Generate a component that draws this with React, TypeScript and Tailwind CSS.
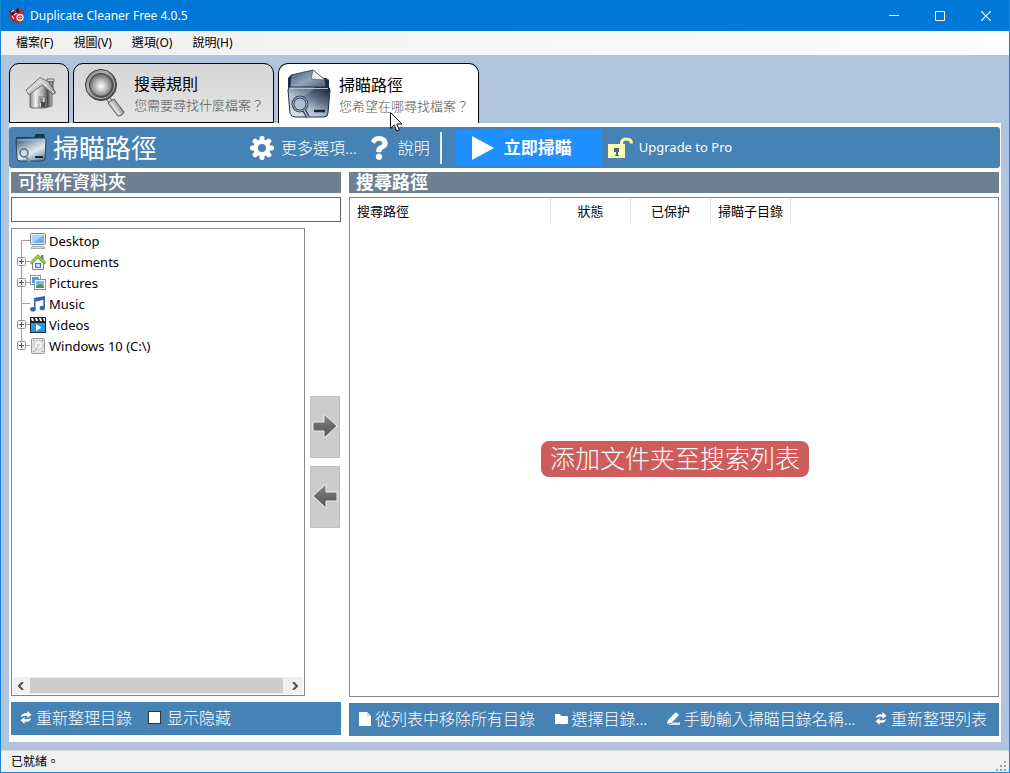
import React from "react";
import { FaQuestion } from "react-icons/fa";

interface TreeNode {
  name: string;
  expandable: boolean;
  icon: React.ReactNode;
}

const MENUS = ["檔案(F)", "視圖(V)", "選項(O)", "說明(H)"];

const AppIcon = () => (
  <svg width="17" height="17" viewBox="0 0 17 17">
    <path d="M1 3l3-1 2 2 3-3 2 2 3-1 1 4-1 8-5 2-5-1-3-4z" fill="#c8202c" />
    <path d="M0 4l3-1 3 3-3 2z" fill="#1b1b2b" />
    <path d="M7 2l3-1v5l-3 1z" fill="#5e0d14" />
    <path d="M2 5l3-2M5 8l3-2M3 9l2 3" stroke="#f3dcdc" strokeWidth="1.2" />
    <circle cx="11" cy="10.5" r="3" fill="none" stroke="#fff" strokeWidth="1.3" />
    <path d="M11 9v3M9.5 10.5h3" stroke="#fbb" strokeWidth="1" />
  </svg>
);

const HouseIcon = () => (
  <svg width="32" height="34" viewBox="0 0 32 34">
    <defs>
      <linearGradient id="house" x1="0" y1="0" x2="1" y2="0">
        <stop offset="0" stopColor="#8a8a8a" />
        <stop offset="0.25" stopColor="#f0f0f0" />
        <stop offset="0.6" stopColor="#a4a4a4" />
        <stop offset="0.8" stopColor="#4c4c4c" />
        <stop offset="1" stopColor="#bdbdbd" />
      </linearGradient>
      <linearGradient id="roof" x1="0" y1="0" x2="1" y2="1">
        <stop offset="0" stopColor="#e9e9e9" />
        <stop offset="0.5" stopColor="#c4c4c4" />
        <stop offset="1" stopColor="#808080" />
      </linearGradient>
    </defs>
    <path d="M23 12V5h5v12z" fill="#8c8c8c" stroke="#4d4d4d" />
    <path d="M22 3h7v2.500h-7z" fill="#d6d6d6" stroke="#555" strokeWidth="0.8" />
    <path d="M5 15L15 7l12 9v14l-7 2H7l-2-1z" fill="url(#house)" stroke="#5a5a5a" strokeWidth="0.8" />
    <path d="M1 14L15 1.500l8 4 8 11-3 2L17 9 4 19z" fill="url(#roof)" stroke="#5c5c5c" strokeWidth="0.8" />
    <path d="M2 16L16 5l13 12" fill="none" stroke="#efefef" />
    <path d="M14 21h6v10h-6z" fill="#dedede" stroke="#666" strokeWidth="0.8" />
    <path d="M15 22h3v5h-3z" fill="#888" />
    <path d="M16 26h4v5h-4z" fill="#4a4a4a" />
  </svg>
);

const MagnifierIcon = () => (
  <svg width="42" height="50" viewBox="0 0 42 50">
    <defs>
      <radialGradient id="lens" cx="0.5" cy="0.55">
        <stop offset="0" stopColor="#fff" />
        <stop offset="0.5" stopColor="#bcbcbc" />
        <stop offset="1" stopColor="#707070" />
      </radialGradient>
      <linearGradient id="rim" x1="0" y1="0" x2="1" y2="1">
        <stop offset="0" stopColor="#555" />
        <stop offset="0.35" stopColor="#bbb" />
        <stop offset="0.6" stopColor="#666" />
        <stop offset="1" stopColor="#444" />
      </linearGradient>
      <linearGradient id="handle" x1="0" y1="1" x2="1" y2="0.3">
        <stop offset="0" stopColor="#333" />
        <stop offset="0.5" stopColor="#e0e0e0" />
        <stop offset="1" stopColor="#4f4f4f" />
      </linearGradient>
    </defs>
    <path d="M22 31l3-2 4 4-3 3z" fill="#ccc" stroke="#444" strokeWidth="0.8" />
    <path d="M24 35l6-4 10 13q-1 4-6 4z" fill="url(#handle)" stroke="#3a3a3a" strokeWidth="0.8" />
    <circle cx="17" cy="17" r="15.5" fill="url(#rim)" stroke="#3c3c3c" />
    <circle cx="17" cy="17" r="13.5" fill="none" stroke="#a8a8a8" />
    <circle cx="17" cy="17" r="11.5" fill="url(#lens)" stroke="#3c3c3c" />
  </svg>
);

const ScanFolderIcon = () => (
  <svg width="44" height="50" viewBox="0 0 44 50">
    <defs>
      <linearGradient id="scanPaper" x1="0" y1="0" x2="1" y2="1">
        <stop offset="0" stopColor="#3c5069" />
        <stop offset="0.5" stopColor="#93a5b8" />
        <stop offset="1" stopColor="#40546c" />
      </linearGradient>
      <linearGradient id="scanFront" x1="0.9" y1="0" x2="0.1" y2="1">
        <stop offset="0" stopColor="#17283e" />
        <stop offset="0.35" stopColor="#5a6e86" />
        <stop offset="0.6" stopColor="#a9b8c7" />
        <stop offset="1" stopColor="#e6edf3" />
      </linearGradient>
    </defs>
    <path d="M1 9l3-3h8l2 3h25l3 2v12H1z" fill="#1b2b41" />
    <path d="M3 19L4 6l22-5 12 10 1 10z" fill="url(#scanPaper)" stroke="#26384e" strokeWidth="0.8" />
    <path d="M26 1l-2 9 14 1z" fill="#f0f4f8" stroke="#33465c" strokeWidth="0.6" />
    <path d="M1 21q0-3 3-3h36q3 0 3 3l-2 23q0 4-4 4H8q-4 0-5-4z" fill="url(#scanFront)" stroke="#213349" />
    <path d="M2 30q20-2 26-12H2z" fill="#fff" fillOpacity="0.2" />
    <path d="M3 19.500h38" stroke="#b4c3d2" />
    <path d="M27 42h11" stroke="#12233a" strokeWidth="2.5" />
    <circle cx="13" cy="35" r="7" fill="#b3c1cf" fillOpacity="0.6" stroke="#394c63" strokeWidth="3" />
    <circle cx="13" cy="35" r="7" fill="none" stroke="#a5b4c4" />
    <path d="M17 41l4 7" stroke="#33465c" strokeWidth="4" />
    <path d="M17 41l4 7" stroke="#b4c2d0" strokeWidth="1.5" />
  </svg>
);

const ToolbarFolderIcon = () => (
  <svg width="32" height="30" viewBox="0 0 32 30">
    <defs>
      <linearGradient id="barFolder" x1="0.2" y1="0" x2="0.8" y2="1">
        <stop offset="0" stopColor="#4a6079" />
        <stop offset="0.35" stopColor="#a9bac9" />
        <stop offset="0.6" stopColor="#e4ebf1" />
        <stop offset="1" stopColor="#6d8299" />
      </linearGradient>
    </defs>
    <path d="M1 4h18l2-3h8l1 3v6H1z" fill="#1b3452" />
    <path d="M1 7q0-2 2-2h26q2 0 2 2l-1 18q0 3-3 3H5q-3 0-3-3z" fill="url(#barFolder)" stroke="#2d435a" />
    <path d="M2 7h28" stroke="#aebfce" />
    <path d="M20 24h8" stroke="#142840" strokeWidth="2" />
    <circle cx="9" cy="20" r="4" fill="#cbd6e1" stroke="#566a80" strokeWidth="1.5" />
    <path d="M11 24l4 5" stroke="#7d91a7" strokeWidth="2.5" />
  </svg>
);

const GearIcon = () => (
  <svg width="24" height="24" viewBox="0 0 24 24">
    {[0, 45, 90, 135].map((angle) => (
      <rect key={angle} x="9.5" y="0" width="5" height="24" rx="2" fill="#fff" transform={`rotate(${angle} 12 12)`} />
    ))}
    <circle cx="12" cy="12" r="8.5" fill="#fff" />
    <circle cx="12" cy="12" r="4" fill="#4682b4" />
  </svg>
);

const PlayIcon = () => (
  <svg width="22" height="24" viewBox="0 0 22 24">
    <path d="M0 0l22 12L0 24z" fill="#fff" />
  </svg>
);

const PadlockIcon = () => (
  <svg width="26" height="24" viewBox="0 0 26 24">
    <path d="M12.500 8V7q0-5.500 6-5.500t6 5.500v1" fill="none" stroke="#47606f" strokeWidth="1.500" opacity="0.6" />
    <path d="M13.500 8V7q0-4 5-4t5 4.500" fill="none" stroke="#fdfcb4" strokeWidth="3" />
    <path d="M0 8h17v14H0z" fill="#fdfcb4" />
    <path d="M6 12h5v4h-1v3h1v1H7v-1h1v-3H6z" fill="#3f6b8c" />
  </svg>
);

const RefreshIcon = () => (
  <svg width="12" height="15" viewBox="0 0 13 15" fill="#fff">
    <path d="M1 7Q1.500 3 6 3h2V.500L12.500 4.500 8 8V5.500H6Q3.500 5.500 1 7z" />
    <path d="M12 8q-.500 4-5 4H5v2.500L.500 10.500 5 7v2.500h2q2.500 0 5-1.500z" />
  </svg>
);

const PageIcon = () => (
  <svg width="12" height="14" viewBox="0 0 12 14" fill="#fff">
    <path d="M0 0h8l4 4v10H0z" />
    <path d="M8 0v4h4z" fill="#c5d9e9" />
  </svg>
);

const FolderIcon = () => (
  <svg width="13" height="10" viewBox="0 0 13 10" fill="#fff">
    <path d="M0 1q0-1 1-1h4l1 2h6q1 0 1 1v6q0 1-1 1H1q-1 0-1-1z" />
  </svg>
);

const PenIcon = () => (
  <svg width="13" height="13" viewBox="0 0 13 13" fill="#fff">
    <path d="M1 8L8 1q1-1 2.200 0l1 1q1 1 0 2L5 10.500 0 12z" />
    <path d="M6 10.500h7V13H1z" fill="#dce8f2" />
  </svg>
);

const DesktopIcon = () => (
  <svg width="16" height="16" viewBox="0 0 16 16">
    <rect x="0.5" y="0.5" width="15" height="11" rx="1" fill="#e8edf2" stroke="#758393" />
    <rect x="2" y="2" width="12" height="8" fill="#6bb1ef" />
    <path d="M2 2h12L3 10H2z" fill="#a9d5fb" />
    <path d="M2 13.500h12l1 2H1z" fill="#d6dade" stroke="#8a949e" strokeWidth="0.7" />
  </svg>
);

const DocumentsIcon = () => (
  <svg width="16" height="16" viewBox="0 0 16 16">
    <path d="M11 1h2.500v5H11z" fill="#4d86c6" />
    <path d="M2.500 8L8 3l5.500 5v7.500h-11z" fill="#f3f5f7" stroke="#7b8896" />
    <path d="M0 8.500L8 .500l8 8-1.500 1.500L8 4 1.500 10z" fill="#a4cf3e" stroke="#5c8a17" strokeWidth="0.8" />
    <rect x="5.5" y="9.5" width="5" height="4" fill="#b8dcff" stroke="#4379b5" />
  </svg>
);

const PicturesIcon = () => (
  <svg width="16" height="16" viewBox="0 0 16 16">
    <rect x="0.5" y="0.5" width="10" height="9" fill="#fff" stroke="#7e95aa" />
    <path d="M2 2h7v6H2z" fill="#4d9dd6" />
    <rect x="4.5" y="4.5" width="11" height="10" fill="#fff" stroke="#7e95aa" />
    <path d="M6 6h8v7H6z" fill="#6dbcf0" />
    <path d="M6 13v-2q3-1 4-2l4 2v2z" fill="#4f9b39" />
  </svg>
);

const MusicIcon = () => (
  <svg width="16" height="16" viewBox="0 0 16 16" fill="#3463b8">
    <path d="M4 2l11-2v3.500L5.500 5.500V13H4z" />
    <path d="M13.300 2H15v10h-1.700z" />
    <ellipse cx="2.9" cy="13.3" rx="2.8" ry="2.3" />
    <ellipse cx="12.3" cy="12" rx="2.7" ry="2.3" />
  </svg>
);

const VideosIcon = () => (
  <svg width="16" height="16" viewBox="0 0 16 16">
    <path d="M0 0h16v16H0z" fill="#20262c" />
    <path d="M1 1h2l1 3H2zM5 1h2l1 3H6zM9 1h2l1 3h-2zM13 1h2v3h-1z" fill="#fff" />
    <path d="M1 6h14v9H1z" fill="#1f9be8" />
    <path d="M6 7l5.500 3.500L6 14z" fill="#fff" />
  </svg>
);

const DriveIcon = () => (
  <svg width="16" height="16" viewBox="0 0 16 16">
    <rect x="1.5" y="0.5" width="13" height="15" rx="1" fill="#e4e4e4" stroke="#999" />
    <circle cx="8.5" cy="7" r="4.5" fill="#f3f3f3" stroke="#c4c4c4" />
    <circle cx="8.5" cy="7" r="1.3" fill="#ccc" />
    <path d="M5 13l3-5" stroke="#b5b5b5" />
    <path d="M3 2h1v1H3zM12 2h1v1h-1zM3 13h1v1H3zM12 13h1v1h-1z" fill="#777" />
  </svg>
);

const TREE: TreeNode[] = [
  { name: "Desktop", expandable: false, icon: <DesktopIcon /> },
  { name: "Documents", expandable: true, icon: <DocumentsIcon /> },
  { name: "Pictures", expandable: true, icon: <PicturesIcon /> },
  { name: "Music", expandable: false, icon: <MusicIcon /> },
  { name: "Videos", expandable: true, icon: <VideosIcon /> },
  { name: "Windows 10 (C:\\)", expandable: true, icon: <DriveIcon /> },
];

const Branch: React.FC<{ expandable: boolean; first: boolean; last: boolean }> = ({ expandable, first, last }) => (
  <svg width="14" height="21" viewBox="0 0 14 21" className="block">
    <path
      d={`M5.500 ${first ? 9 : 0}V${last ? 9 : 21}M5.500 9.500H14`}
      fill="none"
      stroke="#d08a8a"
    />
    {expandable && (
      <>
        <rect x="1.5" y="5.5" width="8" height="8" rx="1" fill="#f7f7f7" stroke="#919191" />
        <path d="M3 9.500h5M5.500 7v5" stroke="#33529a" />
      </>
    )}
  </svg>
);

const Arrow: React.FC<{ flip?: boolean }> = ({ flip }) => (
  <svg width="26" height="28" viewBox="0 0 26 28">
    <defs>
      <linearGradient id="arrow" x1="0" y1="0" x2="0" y2="1">
        <stop offset="0" stopColor="#8a8a8a" />
        <stop offset="0.5" stopColor="#6a6a6a" />
        <stop offset="1" stopColor="#555" />
      </linearGradient>
    </defs>
    <g transform={flip ? "translate(26 0) scale(-1 1)" : undefined}>
      <path d="M1 9h11V1l13 12-13 12v-7H1z" fill="url(#arrow)" stroke="#eee" strokeWidth="1" />
    </g>
  </svg>
);

const FooterButton: React.FC<{ icon: React.ReactNode; label: string }> = ({ icon, label }) => (
  <button className="flex items-center gap-1 whitespace-nowrap">
    {icon}
    {label}
  </button>
);

const TitleBar = () => (
  <header className="flex h-[31px] items-center bg-[#0078d7] pl-2 text-white">
    <AppIcon />
    <h1 className="ml-1 flex-1 text-[12px]">Duplicate Cleaner Free 4.0.5</h1>
    <button aria-label="最小化" className="flex h-full w-[46px] items-center justify-center">
      <svg width="10" height="10" stroke="#fff"><path d="M0 4.500h10" /></svg>
    </button>
    <button aria-label="最大化" className="flex h-full w-[46px] items-center justify-center">
      <svg width="10" height="10" fill="none" stroke="#fff"><path d="M.500.500h9v9h-9z" /></svg>
    </button>
    <button aria-label="關閉" className="flex h-full w-[46px] items-center justify-center">
      <svg width="10" height="10" stroke="#fff" strokeWidth="1.2"><path d="M0 0l10 10M10 0L0 10" /></svg>
    </button>
  </header>
);

const Tabs = () => (
  <div role="tablist" className="flex gap-1">
    <button
      role="tab"
      aria-selected={false}
      aria-label="首頁"
      className="flex h-[60px] w-[60px] items-center justify-center rounded-t-[10px] border border-black bg-linear-to-b from-[#d6d6d6] to-[#e4e4e4] pl-1"
    >
      <HouseIcon />
    </button>
    <button
      role="tab"
      aria-selected={false}
      className="flex h-[60px] w-[201px] items-center gap-2 rounded-t-[10px] border border-black bg-linear-to-b from-[#d6d6d6] to-[#e4e4e4] pl-2.5 text-left"
    >
      <MagnifierIcon />
      <span className="pt-0.5 whitespace-nowrap">
        <span className="block text-[16px] leading-[22px]">搜尋規則</span>
        <span className="block text-[13px] leading-[20px] font-light text-[#555]">您需要尋找什麼檔案？</span>
      </span>
    </button>
    <button
      role="tab"
      aria-selected={true}
      className="relative flex h-[60px] w-[201px] items-center gap-2 rounded-t-[10px] border border-b-0 border-black bg-white pl-2 text-left"
    >
      <ScanFolderIcon />
      <span className="pt-0.5 whitespace-nowrap">
        <span className="block text-[16px] leading-[22px]">掃瞄路徑</span>
        <span className="block text-[13px] leading-[20px] font-light text-[#555]">您希望在哪尋找檔案？</span>
      </span>
      {/* 滑鼠指標 */}
      <svg width="13" height="20" viewBox="0 0 13 20" className="absolute top-[48px] left-[111px] z-10">
        <path d="M.500.500v16l3.700-3.500 2.500 6 2.600-1-2.500-6h5.200z" fill="#fff" stroke="#111" />
      </svg>
    </button>
  </div>
);

const Toolbar = () => (
  <div className="mr-px flex h-[41px] items-center rounded-[3px] bg-[#4682b4] pl-1.5 text-white">
    <ToolbarFolderIcon />
    <h2 className="ml-1.5 w-[197px] text-[26px] leading-[36px] whitespace-nowrap">掃瞄路徑</h2>
    <button className="flex items-center gap-[7px] text-[16px] font-light whitespace-nowrap">
      <GearIcon />
      更多選項...
    </button>
    <button className="ml-2.5 flex items-center gap-[7px] text-[16px] font-light whitespace-nowrap">
      <FaQuestion size={24} />
      說明
    </button>
    <div className="ml-2.5 h-8 w-0.5 bg-[#e8eff5]" />
    <button className="ml-3.5 flex h-[37px] w-[146px] items-center gap-2.5 bg-[#1e90ff] pl-4 text-[17px] font-bold whitespace-nowrap">
      <PlayIcon />
      立即掃瞄
    </button>
    <a href="#upgrade" className="ml-1.5 flex items-center gap-[5px] text-[13px]">
      <PadlockIcon />
      Upgrade to Pro
    </a>
  </div>
);

const FolderPanel = () => {
  const [showHidden, setShowHidden] = React.useState(false);

  return (
    <section className="flex w-[330px] shrink-0 flex-col">
      <h3 className="bg-[#708090] pl-[7px] text-[18px] leading-[21px] font-medium text-white">可操作資料夾</h3>
      <input aria-label="資料夾路徑" className="mt-1 h-[25px] border border-[#646464] bg-white px-1 text-[13px] outline-none" />

      <div className="mt-1.5 flex flex-1 gap-[5px]">
        <div className="flex flex-1 flex-col border border-[#828790] p-px">
          <ul className="flex-1 pt-px pl-[3px]">
            {TREE.map((node, index) => (
              <li key={node.name} className="flex h-[21px] items-center text-[13px]">
                {node.expandable ? (
                  <button aria-label={`展開 ${node.name}`}>
                    <Branch expandable first={false} last={index === TREE.length - 1} />
                  </button>
                ) : (
                  <Branch expandable={false} first={index === 0} last={false} />
                )}
                <span className="pb-0.5">{node.icon}</span>
                <span className="ml-[3px]">{node.name}</span>
              </li>
            ))}
          </ul>
          {/* 水平捲軸 */}
          <div className="flex h-[17px] bg-[#f0f0f0] py-px">
            <button aria-label="向左捲動" className="flex w-[17px] items-center justify-center">
              <svg width="7" height="8" fill="none" stroke="#505050" strokeWidth="2"><path d="M5 0L1 4l4 4" /></svg>
            </button>
            <div className="flex-1 bg-[#cdcdcd]" />
            <button aria-label="向右捲動" className="ml-[3px] flex w-[17px] items-center justify-center">
              <svg width="7" height="8" fill="none" stroke="#505050" strokeWidth="2"><path d="M2 0l4 4-4 4" /></svg>
            </button>
          </div>
        </div>

        <div className="mr-px flex w-[30px] flex-col justify-center gap-2">
          <button aria-label="加入" className="flex h-[62px] items-center justify-center border border-[#bfbfbf] bg-[#cccccc]">
            <Arrow />
          </button>
          <button aria-label="移除" className="flex h-[62px] items-center justify-center border border-[#bfbfbf] bg-[#cccccc]">
            <Arrow flip />
          </button>
        </div>
      </div>

      <div className="mt-1.5 mb-px flex h-[33px] items-center gap-4 bg-[#4682b4] pb-0.5 pl-[9px] text-[16px] font-light text-white">
        <FooterButton icon={<RefreshIcon />} label="重新整理目錄" />
        <label className="flex items-center gap-1.5">
          <input
            type="checkbox"
            checked={showHidden}
            onChange={(e) => setShowHidden(e.target.checked)}
            className="h-[13px] w-[13px] appearance-none border border-[#333] bg-white checked:bg-[#333]"
          />
          显示隐藏
        </label>
      </div>
    </section>
  );
};

const SearchPanel = () => (
  <section className="flex min-w-0 flex-1 flex-col">
    <h3 className="bg-[#708090] pl-[7px] text-[18px] leading-[21px] font-bold text-white">搜尋路徑</h3>
    <div className="mt-1 flex flex-1 flex-col border border-[#828790]">
      <table className="w-[441px] table-fixed border-separate border-spacing-0 text-[13px]">
        <thead>
          <tr className="h-[27px]">
            <th className="w-[201px] border-r border-[#e5e5e5] pl-[7px] text-left font-normal">搜尋路徑</th>
            <th className="w-20 border-r border-[#e5e5e5] font-normal">狀態</th>
            <th className="w-20 border-r border-[#e5e5e5] font-normal">已保护</th>
            <th className="w-20 border-r border-[#e5e5e5] font-normal">掃瞄子目錄</th>
          </tr>
        </thead>
        <tbody />
      </table>
      <div className="flex flex-1 items-center justify-center pb-1 pl-0.5">
        <p className="rounded-lg bg-[#cd5c5c] px-[9px] pb-0.5 text-[25px] leading-[34px] font-light text-white">
          添加文件夹至搜索列表
        </p>
      </div>
    </div>
    <div className="mt-1.5 flex h-[33px] items-center justify-between bg-[#4682b4] pr-3 pb-0.5 pl-2.5 text-[16px] font-light text-white">
      <FooterButton icon={<PageIcon />} label="從列表中移除所有目錄" />
      <FooterButton icon={<FolderIcon />} label="選擇目錄..." />
      <FooterButton icon={<PenIcon />} label="手動輸入掃瞄目錄名稱..." />
      <FooterButton icon={<RefreshIcon />} label="重新整理列表" />
    </div>
  </section>
);

const App: React.FC = () => (
  <div className="flex min-h-screen flex-col border-x border-b border-[#1883d7] bg-[#b0c4de] font-['Noto_Sans','Noto_Sans_CJK_TC','Noto_Sans_CJK_SC',sans-serif] text-black">
    <TitleBar />
    <nav className="flex h-6 items-center gap-5 bg-linear-to-r from-[#f0f0f0] to-[#fdfdfd] pl-[15px] text-[12px]">
      {MENUS.map((menu) => (
        <button key={menu}>{menu}</button>
      ))}
    </nav>

    <main className="flex flex-1 flex-col p-2">
      <Tabs />
      <div className="flex flex-1 flex-col bg-white pt-1 pb-1.5">
        <Toolbar />
        <div className="mx-0.5 mt-1 flex flex-1 gap-2">
          <FolderPanel />
          <SearchPanel />
        </div>
      </div>
    </main>

    <footer className="flex h-[22px] items-center justify-between border-t border-[#d7d7d7] bg-[#f0f0f0] pr-0.5 pl-2.5 text-[12px]">
      <span>已就緒。</span>
      <svg width="11" height="11" viewBox="0 0 11 11" fill="#a0a0a0" className="self-end">
        <path d="M8 0h2v2H8zM4 4h2v2H4zM8 4h2v2H8zM0 8h2v2H0zM4 8h2v2H4zM8 8h2v2H8z" />
      </svg>
    </footer>
  </div>
);

export default App;
